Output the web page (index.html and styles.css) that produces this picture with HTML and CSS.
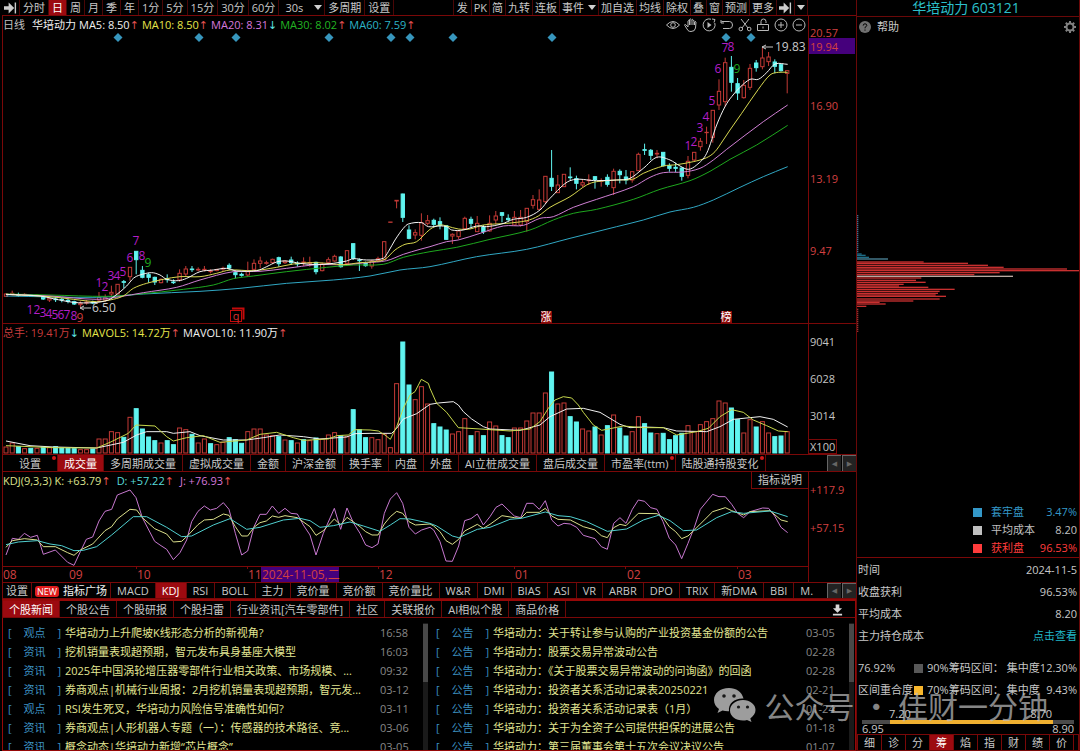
FILE: index.html
```html
<!DOCTYPE html>
<html lang="zh-CN">
<head>
<meta charset="utf-8">
<title>华培动力 603121</title>
<link rel="stylesheet" href="styles.css">
</head>
<body>
<div class="terminal">
  <main class="main">
    <nav class="toolbar">
      <button class="tool icon-tool" aria-label="展开"><svg class="jump" viewBox="0 0 14 12"><path d="M0 4h5V0l6 6-6 6V8H0zM11.500 0h1.500v12h-1.500z"/></svg></button>
      <button class="tool">分时</button><button class="tool on">日</button><button class="tool">周</button><button class="tool">月</button><button class="tool">季</button><button class="tool">年</button><button class="tool">1分</button><button class="tool">5分</button><button class="tool">15分</button><button class="tool">30分</button><button class="tool">60分</button>
      <button class="tool seconds">30s<i class="caret"></i></button><button class="tool">多周期</button><button class="tool">设置</button>
      <div class="tool-right">
        <button class="tool first">发</button><button class="tool">PK</button><button class="tool">简</button><button class="tool">九转</button><button class="tool">连板</button><button class="tool event">事件<i class="caret"></i></button><button class="tool">加自选</button><button class="tool">均线</button><button class="tool">除权</button><button class="tool">叠</button><button class="tool">窗</button><button class="tool">预测</button><button class="tool">更多</button><button class="tool" aria-label="跳转"><svg class="jump" viewBox="0 0 14 12"><path d="M0 4h5V0l6 6-6 6V8H0zM11.500 0h1.500v12h-1.500z"/></svg></button><button class="tool" aria-label="菜单"><i class="caret"></i></button>
      </div>
    </nav>

    <section class="panel">
      <div class="plot">
        <div class="info">
          <span class="c-grey period">日线</span><span class="c-white">华培动力</span>
          <span class="c-white">MA5: 8.50<b class="up">↑</b></span><span class="c-yellow">MA10: 8.50<b class="up">↑</b></span><span class="c-pink">MA20: 8.31<b class="down">↓</b></span><span class="c-green">MA30: 8.02<b class="up">↑</b></span><span class="c-cyan">MA60: 7.59<b class="up">↑</b></span>
          <div class="chart-tools">
            <svg viewBox="0 0 14 14"><path d="M.500 7Q7 0 13.500 7 7 14 .500 7z"/><circle cx="7" cy="7" r="2.300"/></svg>
            <svg viewBox="0 0 14 14"><path d="M4 9 1.500 6.500q-1-.2-.8.8L4 12.500q1 1 3 1 4 0 4.500-3.500l.5-6q-.8-1.500-1.500 0V7M4 9V3q.8-1.300 1.500 0v4M5.500 3V1.500q.8-1.300 1.500 0V7M7.500 2q.8-1.500 1.500 0v5M9 3q.8-1.300 1.500 0"/></svg>
            <svg viewBox="0 0 14 14"><path d="M9 1.200A6 6 0 1 0 12.800 5M10 1l3 .5-1 3"/><path class="solid" d="M5.500 4v6l4-3z"/></svg>
            <svg viewBox="0 0 14 14"><path d="M1.500 3.500h8q3 0 3 3.500t-3 3.500H3M1 2v3h3"/></svg>
            <svg viewBox="0 0 14 14"><path d="M3 1l7 9M11 1l-7 9"/><circle cx="2.800" cy="11" r="1.800"/><circle cx="11.200" cy="11" r="1.800"/></svg>
            <svg viewBox="0 0 14 14"><path d="M1.500 6.500h11v6h-11zM5 6V3.500q0-2.500 2.500-2.500T10 3.500V5M7 8.500v2"/></svg>
            <svg viewBox="0 0 14 14"><circle cx="7" cy="7" r="6"/><path d="M4 7h6M7 4v6"/></svg>
            <svg viewBox="0 0 14 14"><circle cx="7" cy="7" r="6"/><path d="M4 7h6"/></svg>
          </div>
        </div>
        <svg class="chart" viewBox="3 33 805 290">
          <g id="diamonds" class="diamond"></g>
          <g id="price"></g>
          <g id="counts" class="count"></g>
          <path class="pointer" d="M773 47H762m4-2-4 2 4 2M91 308H80m4-2-4 2 4 2"/>
          <text class="mark" x="775" y="51">19.83</text>
          <text class="mark" x="92" y="312">6.50</text>
          <path class="q-back" d="M232 308.500h11.500v11"/><rect class="q-box" x="230.500" y="310.500" width="11" height="11"/><text class="q-text" x="236" y="320">q</text>
          <rect class="badge-bg" x="541" y="311" width="11" height="12"/><text class="badge" x="546" y="321">涨</text>
          <rect class="badge-bg" x="721" y="311" width="11" height="12"/><text class="badge" x="726" y="321">榜</text>
        </svg>
      </div>
      <svg class="axis axis-red" viewBox="809 16 47 307">
        <text x="810" y="37">20.57</text><rect class="cursor" x="809" y="38" width="46" height="16"/><text x="810" y="51">19.94</text>
        <text x="810" y="110">16.90</text><text x="810" y="183">13.19</text><text x="810" y="255">9.47</text>
      </svg>
    </section>

    <section class="panel">
      <div class="plot">
        <div class="info">
          <span class="c-red">总手: 19.41万<b class="down">↓</b></span><span class="c-yellow">MAVOL5: 14.72万<b class="up">↑</b></span><span class="c-white">MAVOL10: 11.90万<b class="up">↑</b></span>
        </div>
        <svg class="chart" viewBox="3 341 805 113"><g id="volume"></g></svg>
      </div>
      <svg class="axis axis-grey" viewBox="809 324 47 130">
        <text x="810" y="346">9041</text><text x="810" y="383">6028</text><text x="810" y="420">3014</text><rect class="unit" x="808.500" y="439.500" width="28" height="14"/><text x="810" y="451">X100</text>
      </svg>
    </section>

    <nav class="tabs">
      <button class="tab wide dot">设置</button><button class="tab on">成交量</button><button class="tab">多周期成交量</button><button class="tab">虚拟成交量</button><button class="tab">金额</button><button class="tab">沪深金额</button><button class="tab">换手率</button><button class="tab">内盘</button><button class="tab">外盘</button><button class="tab">AI立桩成交量</button><button class="tab">盘后成交量</button><button class="tab dot">市盈率(ttm)</button><button class="tab dot">陆股通持股变化</button>
      <span class="pager"><button aria-label="上一页">◀</button><button aria-label="下一页">▶</button></span>
    </nav>

    <section class="panel">
      <div class="plot">
        <div class="info roomy">
          <span class="c-pale">KDJ(9,3,3) K: +63.79<b class="up">↑</b></span><span class="c-aqua">D: +57.22<b class="up">↑</b></span><span class="c-pink">J: +76.93<b class="up">↑</b></span>
          <button class="explain">指标说明</button>
        </div>
        <svg class="chart dates" viewBox="3 489 805 93">
          <g id="kdj"></g>
          <path class="rule" d="M3 566.500H808M136.500 566v3M247.500 566v3M378.500 566v3M514.500 566v3M625.500 566v3M737.500 566v3"/>
          <rect class="cursor" x="261" y="567" width="78" height="15"/>
          <text x="3" y="579">08</text><text x="69" y="579">09</text><text x="137" y="579">10</text><text x="248" y="579">11</text><text x="262" y="579">2024-11-05,二</text><text x="379" y="579">12</text><text x="515" y="579">01</text><text x="627" y="579">02</text><text x="738" y="579">03</text>
        </svg>
      </div>
      <svg class="axis axis-red" viewBox="809 472 47 110">
        <path class="rule" d="M808 566.500h1"/><text x="810" y="494">+117.9</text><text x="810" y="532">+57.15</text>
      </svg>
    </section>

    <nav class="tabs indicators">
      <button class="tab slim">设置</button><button class="tab slim bright"><span class="new">NEW</span>指标广场</button><button class="tab">MACD</button><button class="tab on">KDJ</button><button class="tab">RSI</button><button class="tab">BOLL</button><button class="tab">主力</button><button class="tab">竞价量</button><button class="tab">竞价额</button><button class="tab">竞价量比</button><button class="tab">W&amp;R</button><button class="tab">DMI</button><button class="tab">BIAS</button><button class="tab">ASI</button><button class="tab">VR</button><button class="tab">ARBR</button><button class="tab">DPO</button><button class="tab">TRIX</button><button class="tab">新DMA</button><button class="tab">BBI</button><button class="tab last">M.</button>
      <span class="pager"><button aria-label="上一页">◀</button><button aria-label="下一页">▶</button></span>
    </nav>

    <nav class="tabs news-tabs">
      <button class="tab on">个股新闻</button><button class="tab">个股公告</button><button class="tab">个股研报</button><button class="tab">个股扫雷</button><button class="tab">行业资讯[汽车零部件]</button><button class="tab">社区</button><button class="tab">关联报价</button><button class="tab">AI相似个股</button><button class="tab">商品价格</button>
      <button class="download" aria-label="下载"><svg viewBox="0 0 12 12"><path d="M4 0h4v4h3L6 9 1 4h3zM1 10h10v2H1z"/></svg></button>
    </nav>

    <section class="news">
      <div class="feed">
        <ul>
          <li><span class="tag"><i>[</i>观点<i>]</i></span><a href="#">华培动力上升爬坡K线形态分析的新视角?</a><time>16:58</time></li>
          <li><span class="tag"><i>[</i>资讯<i>]</i></span><a href="#">挖机销量表现超预期，智元发布具身基座大模型</a><time>16:03</time></li>
          <li><span class="tag"><i>[</i>资讯<i>]</i></span><a href="#">2025年中国涡轮增压器零部件行业相关政策、市场规模、...</a><time>09:32</time></li>
          <li><span class="tag"><i>[</i>资讯<i>]</i></span><a href="#">券商观点|机械行业周报：2月挖机销量表现超预期，智元发...</a><time>03-12</time></li>
          <li><span class="tag"><i>[</i>观点<i>]</i></span><a href="#">RSI发生死叉，华培动力风险信号准确性如何?</a><time>03-11</time></li>
          <li><span class="tag"><i>[</i>资讯<i>]</i></span><a href="#">券商观点|人形机器人专题（一）：传感器的技术路径、竞...</a><time>03-06</time></li>
          <li><span class="tag"><i>[</i>资讯<i>]</i></span><a href="#">概念动态|华培动力新增“芯片概念”</a><time>03-05</time></li>
        </ul>
        <div class="scroll"><i></i></div>
      </div>
      <div class="feed second">
        <ul>
          <li><span class="tag"><i>[</i>公告<i>]</i></span><a href="#">华培动力：关于转让参与认购的产业投资基金份额的公告</a><time>03-05</time></li>
          <li><span class="tag"><i>[</i>公告<i>]</i></span><a href="#">华培动力：股票交易异常波动公告</a><time>02-28</time></li>
          <li><span class="tag"><i>[</i>公告<i>]</i></span><a href="#">华培动力：《关于股票交易异常波动的问询函》的回函</a><time>02-28</time></li>
          <li><span class="tag"><i>[</i>公告<i>]</i></span><a href="#">华培动力：投资者关系活动记录表20250221</a><time>02-21</time></li>
          <li><span class="tag"><i>[</i>公告<i>]</i></span><a href="#">华培动力：投资者关系活动记录表（1月）</a><time>01-24</time></li>
          <li><span class="tag"><i>[</i>公告<i>]</i></span><a href="#">华培动力：关于为全资子公司提供担保的进展公告</a><time>01-18</time></li>
          <li><span class="tag"><i>[</i>公告<i>]</i></span><a href="#">华培动力：第三届董事会第十五次会议决议公告</a><time>01-07</time></li>
        </ul>
        <div class="scroll"><i></i></div>
      </div>
    </section>
  </main>

  <aside class="side">
    <h1>华培动力 603121</h1>
    <div class="help">
      <button><svg viewBox="0 0 12 12"><circle cx="6" cy="6" r="6"/><path d="M4.200 4.600q0-1.800 1.800-1.800t1.800 1.600q0 1-1.800 2v.9M6 8.500v1.200"/></svg>帮助</button>
      <button aria-label="设置"><svg class="gear" viewBox="0 0 12 12"><circle cx="6" cy="6" r="3.500"/><path d="M6 0v2.500M6 9.500V12M0 6h2.500M9.500 6H12M1.800 1.800l1.700 1.700M8.500 8.500l1.700 1.700M1.800 10.200l1.700-1.700M8.500 3.500l1.700-1.700"/></svg></button>
    </div>
    <svg class="chips" viewBox="857 37 222 440" preserveAspectRatio="xMinYMin meet"><g id="chips"></g></svg>
    <dl class="legend">
      <div class="c-blue"><dt>套牢盘</dt><dd>3.47%</dd></div>
      <div class="c-grey"><dt>平均成本</dt><dd>8.20</dd></div>
      <div class="c-hot"><dt>获利盘</dt><dd>96.53%</dd></div>
    </dl>
    <dl class="facts">
      <div><dt>时间</dt><dd>2024-11-5</dd></div>
      <div><dt>收盘获利</dt><dd>96.53%</dd></div>
      <div><dt>平均成本</dt><dd>8.20</dd></div>
      <div><dt>主力持仓成本</dt><dd><a href="#">点击查看</a></dd></div>
    </dl>
    <div class="zones">
      <span>76.92%</span><i class="swatch grey"></i><span>90%筹码区间：</span><span>集中度12.30%</span>
      <span>区间重合度</span><i class="swatch gold"></i><span>70%筹码区间：</span><span class="split">集中度<em>9.43%</em></span>
    </div>
    <div class="range">
      <div class="range-inner"><span>7.20</span><span>8.70</span></div>
      <div class="bar"><i></i></div>
      <div class="range-outer"><span>6.95</span><span>8.90</span></div>
    </div>
    <nav class="side-tabs">
      <button>细</button><button>诊</button><button>分</button><button class="on">筹</button><button>焰</button><button>指</button><button>财</button><button>绩</button><button>价</button>
    </nav>
  </aside>

  <div class="watermark">
    <svg viewBox="0 0 42 34"><path d="M15 0C6 0 0 5.500 0 12c0 4 2 7 5 9l-1.500 4 5-2.500q3 1 6.500.8C14 15 21 10 29.500 10.500 28 4 22 0 15 0z"/><path d="M29 12c-7 0-13 4.500-13 10.500S22 32.500 29 32.500q2 0 4-.6l4.500 2-1.200-3.500C39.500 28 41.500 25.500 41.500 22 41.500 16.500 36 12 29 12z"/><g class="eyes"><circle cx="10" cy="8" r="1.800"/><circle cx="20" cy="8" r="1.800"/><circle cx="24.500" cy="19" r="1.600"/><circle cx="33.500" cy="19" r="1.600"/></g></svg>
    <span>公众号 · 佳财一分钟</span>
  </div>
</div>
<script src="charts.js"></script>
</body>
</html>
```

FILE: styles.css
```css
* { box-sizing: border-box; }
body {
  margin: 0;
  background: #000;
  color: #c8c8c8;
  font: 11px/16px "Open Sans", "Noto Sans CJK SC", sans-serif;
}
button {
  margin: 0;
  padding: 0;
  border: 0;
  background: none;
  color: inherit;
  font: inherit;
  white-space: nowrap;
}
a { color: inherit; text-decoration: none; }
i, em { font-style: normal; }
ul, dl, dd { margin: 0; padding: 0; list-style: none; }

.terminal { position: relative; display: flex; height: 100vh; overflow: hidden; }
.main { flex: 1; min-width: 0; display: flex; flex-direction: column; padding-left: 2px; }

/* Top toolbar */
.toolbar { display: flex; height: 16px; padding-right: 48px; border-bottom: 1px solid #7a0808; overflow: hidden; }
.tool { display: flex; align-items: center; padding: 0 3px; border-right: 1px solid #4a0606; line-height: 14px; }
.tool.on { background: #9c0a10; color: #fff; }
.icon-tool { padding: 0 2px; }
.jump { width: 13px; height: 12px; fill: #ccc; }
.seconds { padding: 0 2px 0 6px; gap: 11px; }
.event { gap: 4px; }
.caret { border: 4px solid transparent; border-top: 5px solid #d0d0d0; border-bottom: 0; }
.tool-right { display: flex; margin-left: auto; }
.tool-right .tool { padding: 0 2px; }
.tool-right .first { padding: 0 3px; border-left: 1px solid #4a0606; }

/* Chart panels */
.panel { display: grid; grid-template-columns: minmax(0, 1fr) 48px; border-bottom: 1px solid #7a0808; }
.plot { border-left: 1px solid #7a0808; min-width: 0; }
.info { display: flex; align-items: center; gap: 3px; height: 17px; white-space: nowrap; }
.info.roomy { gap: 6px; }
.info b { font-family: "Noto Sans", "DejaVu Sans", sans-serif; font-weight: 400; }
.period { margin-right: 4px; }
.chart { display: block; width: 100%; }
.axis { display: block; width: 100%; border-left: 1px solid #7a0808; }
.axis-red text, .dates text { fill: #d24040; }
.axis-grey text { fill: #c4c4c4; }
.dates { font-size: 12px; }
.cursor { fill: #45007c; }
.unit, .rule { fill: none; stroke: #7a0808; }
.explain { align-self: stretch; margin-left: auto; padding: 0 6px; border: 1px solid #7a0808; border-width: 0 0 1px 1px; }
.chart-tools { display: flex; gap: 4px; margin-left: auto; margin-right: 2px; }
.chart-tools svg { width: 14px; height: 14px; fill: none; stroke: #b8b8b8; }
.chart-tools .solid { fill: #b8b8b8; stroke: none; }

.c-grey { color: #c0c0c0; }
.c-white { color: #f0f0f0; }
.c-yellow { color: #e6e64a; }
.c-pink { color: #d678dc; }
.c-green { color: #22b422; }
.c-cyan { color: #2cb4c8; }
.c-aqua { color: #58dcdc; }
.c-pale { color: #dce08c; }
.c-red { color: #c83c3c; }
.c-blue { color: #3498c8; }
.c-hot { color: #ff3c3c; }
.up { color: #e05050; }
.down { color: #5ce0e0; }

.line { fill: none; stroke-width: 3; stroke-linejoin: round; }
.rise { fill: #000; stroke: #c43a36; stroke-width: 3; }
.fall { fill: #60f4f0; stroke: #60f4f0; stroke-width: 3; }
.diamond { fill: #3796bd; }
.count, .badge, .q-text { text-anchor: middle; }
.count { font-size: 12px; fill: #b41ec8; }
.count .nine { fill: #1eaa1e; }
.count .low { fill: #c83c3c; }
.mark { font-size: 12px; fill: #c8c8c8; }
.pointer { fill: none; stroke: #c8c8c8; }
.badge-bg { fill: #8c0a0a; }
.badge { font-size: 11px; fill: #fff; }
.q-box, .q-back { fill: none; stroke: #c40a0a; }
.q-back { stroke-width: 2; }
.q-text { fill: #d83030; font-size: 11px; }

/* Tab strips */
.tabs { display: flex; height: 17px; border-bottom: 1px solid #7a0808; border-left: 1px solid #7a0808; overflow: hidden; }
.tab { position: relative; padding: 0 6px; border-right: 1px solid #6a0808; line-height: 15px; }
.tab.on { background: #9c0a10; color: #fff; }
.tab.wide { padding: 0 16px; }
.tab.slim { padding: 0 3px; }
.tab.last { padding-right: 0; border: 0; }
.bright { color: #f0f0f0; }
.dot::after { content: ""; position: absolute; top: 1px; right: 1px; width: 4px; height: 4px; border-radius: 2px; background: #d01818; }
.new { display: inline-block; margin-right: 4px; padding: 0 2px; border-radius: 3px; background: #e01c1c; color: #fff; font-size: 9px; line-height: 11px; }
.pager { display: flex; flex: none; gap: 1px; margin-left: auto; }
.pager button { width: 14px; border: 1px solid #666; border-width: 1px 0 0 1px; background: #222; color: #666; font: 7px/12px "DejaVu Sans", sans-serif; }
.indicators { height: 16px; }
.news-tabs { height: 19px; border-top: 2px solid #960808; border-right: 1px solid #960808; }
.news-tabs .tab { line-height: 15px; }
.download { margin: 2px 12px 0 auto; }
.download svg { display: block; width: 11px; height: 12px; fill: #d8d8d8; }

/* News feeds */
.news { display: grid; grid-template-columns: 1fr 1fr; flex: 1; min-height: 0; overflow: hidden; border: 1px solid #960808; border-top: 0; }
.feed { display: flex; min-width: 0; min-height: 0; padding-top: 5px; }
.feed ul { flex: 1; min-width: 0; }
.feed li { display: grid; grid-template-columns: 53px minmax(0, 1fr) 43px; column-gap: 4px; padding-left: 5px; line-height: 19px; white-space: nowrap; }
.feed.second li { padding-left: 7px; }
.feed a { color: #e2e692; }
.feed time { color: #888; }
.tag { display: flex; justify-content: space-between; color: #3c90c0; }
.scroll { width: 5px; margin-right: 1px; background: #1a1a1a; }
.scroll i { display: block; height: 58px; margin-top: 1px; background: #484848; }

/* Right sidebar */
.side { display: flex; flex-direction: column; width: 224px; border-left: 1px solid #6a0808; border-right: 1px solid #6a0808; }
.side h1 { height: 17px; margin: 0; padding-right: 4px; border-bottom: 1px solid #6a0808; color: #2cc0cc; font-size: 14px; font-weight: 400; line-height: 15px; text-align: center; }
.help { display: flex; justify-content: space-between; padding: 0 3px 0 2px; height: 20px; }
.help button { display: flex; align-items: center; gap: 6px; }
.help svg { width: 12px; height: 12px; fill: #707070; stroke: #000; }
.help circle { stroke: none; }
.help .gear { fill: none; stroke: #808080; stroke-width: 2; }
.help .gear circle { fill: none; stroke: #808080; }
.chips { flex: 1; width: 100%; min-height: 0; }
.legend { padding: 0 2px 0 116px; border-bottom: 1px solid #7a0808; }
.legend div { display: flex; align-items: center; height: 18px; }
.legend div::before { content: ""; width: 9px; height: 9px; margin-right: 9px; background: currentColor; }
.legend dd, .facts dd { margin-left: auto; }
.facts { padding: 1px 2px 0 1px; }
.facts div { display: flex; height: 22px; line-height: 22px; }
.facts a { color: #20b8c8; }
.zones { display: grid; grid-template-columns: 56px 13px 1fr auto; align-items: center; padding: 10px 2px 0 1px; line-height: 22px; white-space: nowrap; }
.split { display: flex; justify-content: space-between; }
.swatch { width: 9px; height: 9px; }
.grey { background: #585858; }
.gold { background: #f8b62c; }
.range { padding: 7px 5px 0; line-height: 12px; }
.range-inner { display: flex; justify-content: space-between; padding: 0 22px 0 27px; }
.range-outer { display: flex; justify-content: space-between; line-height: 10px; }
.bar { height: 4px; background: #4a4a4a; }
.bar i { display: block; width: 77%; height: 4px; margin-left: 13%; background: #f0b030; }
.side-tabs { display: flex; height: 17px; border: 1px solid #7a0808; }
.side-tabs button { flex: 0 1 24px; border-right: 1px solid #7a0808; line-height: 15px; }
.side-tabs .on { background: #9c0a10; color: #fff; }

/* Account watermark over the page */
.watermark { position: absolute; right: 32px; bottom: 28px; display: flex; align-items: center; gap: 9px; color: #bebebe; opacity: .7; font: 400 30px/36px "Noto Sans CJK SC", sans-serif; white-space: nowrap; pointer-events: none; }
.watermark svg { width: 42px; height: 34px; fill: #e0e0e0; }
.watermark .eyes { fill: #222; }
```

FILE: charts.js
```js
// Curve and bar coordinates are kept in thirds of a pixel.
const NS = 'http://www.w3.org/2000/svg';
const STEP = 18.6, FIRST = 18;

function add(parent, tag, attrs, text) {
  const el = document.createElementNS(NS, tag);
  for (const k in attrs) el.setAttribute(k, attrs[k]);
  if (text) el.textContent = text;
  parent.appendChild(el);
  return el;
}
function layer(id) {
  return add(document.getElementById(id), 'g', { transform: 'scale(0.33333)' });
}
function points(parts) {
  return parts.flatMap(([dx, dy, s]) => s.split(' ').map(p => {
    const [x, y] = p.split(',').map(Number);
    return [x + dx, y + dy];
  }));
}
function line(g, color, smooth, ...parts) {
  const p = points(parts);
  let d = 'M' + p[0];
  for (let i = 1; i < p.length; i++) {
    if (!smooth) { d += 'L' + p[i]; continue; }
    const a = p[i - 2] || p[i - 1], b = p[i - 1], c = p[i], e = p[i + 1] || c;
    const k = (c[0] - b[0]) / 3;
    const sb = (c[1] - a[1]) / (c[0] - a[0]), sc = (e[1] - b[1]) / (e[0] - b[0]);
    d += `C${b[0] + k},${b[1] + k * sb} ${c[0] - k},${c[1] - k * sc} ${c}`;
  }
  add(g, 'path', { d, class: 'line', stroke: color });
}

// Candles: direction, high, body top, body bottom, low
const candles = [
  [480, `r400,402,409,410 r392,400,404,406 c398,404,406,410 r400,403,405,408 c402,405,409,411 r402,405,407,410 c406,409,417,420 r412,415,420,426 c410,417,419,426 c413,418,420,427 c415,421,424,430 c422,425,432,435 r424,430,434,442 r420,426,429,434 c422,427,429,432 r396,412,420,426 r403,413,420,425 r377,397,402,412 r373,373,402,402 c360,365,367,384 r322,322,350,362 c273,274,299,343 c318,331,352,355 c338,344,352,368 c350,352,366,375 r355,358,368,370 c343,357,359,368 c358,366,368,372 r328,340,360,365 r318,327,342,348 c318,327,329,336 r322,328,330,334 r318,328,330,334 r328,333,335,340 r326,329,331,334 r320,325,327,335 c310,316,324,330 c334,338,344,355 c338,343,346,350 r305,335,345,350 r298,310,328,335 r290,303,310,325 r302,308,310,314 r296,298,308,312 c290,293,311,320 r300,303,308,312 c290,300,308,315 c304,310,312,320 r292,306,308,318 r290,308,310,320 c305,307,335,343 r308,312,332,334 r292,299,307,314 r284,289,303,305 c288,291,320,323 r270,272,310,310 c250,251,295,300 c295,300,302,333 c305,309,317,320 r300,303,318,326 r290,296,302,304 r244,245,298,298 r186,186,186,186 r121,121,123,145 c101,102,172,186 c196,210,235,238 r208,218,225,238 r160,188,226,242 r165,182,190,196`],
  [390, `c266,271,283,292 c262,275,286,298 c286,287,328,330 r310,313,318,342 r300,303,320,328 r260,265,296,298 c260,268,280,292 r258,280,305,306 c285,291,305,312 r256,280,303,305 r243,258,270,282 c246,248,256,277 c253,265,269,275 r243,262,285,285 r240,262,285,290 r235,235,275,305 r195,209,226,236 r178,210,238,238 r139,139,215,222 c60,145,169,183 r135,165,188,188 r133,133,170,170 c112,141,143,150 c137,146,160,178 r148,158,165,172 r133,150,152,165 c138,140,149,176 r145,152,154,170 c133,142,163,170 r116,124,173,195 c118,124,134,160 c120,141,150,163 r124,125,150,158 r68,73,122,122 c41,59,61,75 c57,61,76,90 r60,70,72,85 c66,67,107,110 c100,107,115,125 c98,112,115,126 c112,114,139,152 r78,94,136,145 r66,67,90,95 r24,34,50,62`],
  [0, `r380,397,398,432 r331,331,412,428 r238,274,315,330 r173,188,305,320 c168,202,247,275 c234,251,279,300 r240,256,293,296 r192,205,262,270 c180,189,203,215 r142,174,200,208 r156,171,185,198 c178,186,199,220 c192,194,212,215 r211,212,220,280`]
];
const price = layer('price');
let n = 0;
for (const [dy, rows] of candles) {
  for (const row of rows.split(' ')) {
    const [hi, top, bottom, lo] = row.slice(1).split(',').map(v => +v + dy);
    const x = FIRST + STEP * n++;
    const cls = row[0] === 'r' ? 'rise' : 'fall';
    add(price, 'path', { class: cls, d: `M${x} ${hi}V${top}M${x} ${bottom}V${lo}` });
    add(price, 'rect', { class: cls, x: x - 5, y: top, width: 10, height: Math.max(bottom - top, 1) });
  }
}
line(price, '#30a8c4', true,
  [0, 480, '18,408 290,412 430,402 600,394 720,385 860,370 1000,360 1110,348 1200,330'],
  [1290, 390, '0,410 140,380 290,358 420,325 560,290 640,270 720,246 790,232 850,210 930,172 1000,140 1073,110']);
line(price, '#1ea81e', true,
  [0, 480, '18,402 150,405 320,409 420,402 550,388 640,375 700,356 760,348 860,335 980,322 1060,315 1150,313 1210,292'],
  [1290, 390, '0,365 80,352 180,328 300,300 370,270 430,250 500,238 610,208 690,178 780,152 840,124 900,88 980,45 1073,-14']);
line(price, '#d080d4', true,
  [0, 480, '18,403 150,408 290,418 360,410 430,398 530,382 600,360 700,335 780,334 860,325 950,314 1030,314 1100,308 1160,302 1210,283 1260,268'],
  [1290, 390, '0,350 50,335 85,330 150,310 220,288 280,286 330,265 370,260 430,232 500,208 610,170 660,142 700,128 760,126 810,115 850,90 890,58 1000,-25 1073,-75']);
line(price, '#d8d850', true,
  [0, 480, '18,403 150,410 220,418 290,425 330,420 370,408 400,385 440,370 490,358 540,350 600,350 650,340 690,330 760,332 830,322 880,312 950,308 1030,314 1080,308 1120,305 1155,298 1185,270 1215,253 1250,245'],
  [1290, 390, '0,298 30,285 50,288 85,297 120,297 160,285 230,280 290,272 325,258 360,232 420,200 470,165 500,155 560,150 610,147 640,130 700,108 740,104 790,95 830,83 855,65 880,30'],
  [1290, 0, '900,390 935,340 985,268 1020,225 1045,217 1073,217']);
line(price, '#f4f4f4', true,
  [0, 480, '18,403 60,405 120,408 160,416 220,427 280,428 325,420 352,402 380,378 400,355 420,345 455,338 480,345 500,358 535,362 560,355 600,335 640,330 680,325 710,333 770,332 800,320 830,306 860,303 900,310 950,314 1000,310 1040,303 1060,296 1100,300 1150,295 1165,275 1185,240 1210,205 1225,192 1265,188 1285,200'],
  [1290, 390, '30,288 50,290 65,300 100,300 140,288 170,290 215,282 250,268 290,262 330,240 360,205 420,152 500,152 560,150 600,145 640,115 680,82 720,90 750,108 775,118 800,105 830,70'],
  [1290, 0, '860,375 885,320 905,290 930,262 960,238 985,238 1010,218 1035,192 1073,193']);

const diamonds = document.getElementById('diamonds');
for (const x of [118, 199, 236, 329, 391, 410, 453, 552, 726, 751]) {
  add(diamonds, 'path', { d: `M${x} 33l4.500 4.500-4.500 4.500-4.500-4.500z` });
}
const counts = document.getElementById('counts');
const sequences = [
  ['low', '30,314 37,314 43,317 49,318 55,319 61,319 67,319 74,320 80,322'],
  ['nine', '99,287 105,291 111,280 117,280 123,276 130,262 136,245 142,260 148,267'],
  ['nine', '688,150 694,146 700,132 706,121 712,105 718,73 725,52 731,51 737,73']
];
for (const [last, s] of sequences) {
  s.split(' ').forEach((p, i) => {
    const [x, y] = p.split(',');
    add(counts, 'text', { x, y, class: i === 8 ? last : 'step' }, String(i + 1));
  });
}

// Volume: direction and bar top
const volume = layer('volume');
const bars = 'r364 r352 c363 r369 c368 r368 c364 r366 c363 c367 c368 c369 r372 r372 c370 r340 r340 r318 r321 c335 r275 c249 c310 c334 c345 r352 c345 c357 r307 r312 c326 r352 r340 c354 r357 r350 c336 c342 c353 r318 r310 r310 r328 r330 c333 r343 c345 r352 c342 r345 c337 r340 r328 r321 c330 r333 c252 c312 c336 r336 r342 r325 r366 r174 c49 c178 r222 r183 r235 c294 c304 c313 r325 r318 r279 c330 r318 c330 r289 r301 c330 c336 r307 r307 r286 r262 r262 r202 c139 r235 r232 c273 c289 r310 r316 c304 r328 c300 r268 c307 c331 r318 r273 c294 c322 r324 c323 c342 c330 c323 r300 r318 r297 r288 r279 r226 r232 c247 c282 r322 r282 c304 r288 r322 c333 c331 r318';
bars.split(' ').forEach((b, i) => {
  const top = +b.slice(1) + 2;
  add(volume, 'rect', { class: b[0] === 'r' ? 'rise' : 'fall', x: FIRST + STEP * i - 6, y: 975 + top, width: 12, height: 384 - top });
});
line(volume, '#f0f0f0', false,
  [0, 975, '18,348 90,362 160,366 290,369 370,352 410,330 440,320 500,320 520,325 570,320 600,332 670,345 740,345 790,338 840,330 910,335 960,342 1040,336 1065,326 1110,325 1175,325 1190,310 1210,282 1250,266 1290,238'],
  [1290, 975, '25,234 70,230 85,240 100,260 125,282 160,305 180,312 270,316 330,300 360,275 410,252 460,250 510,262 570,298 600,308 640,306 700,308 740,318 830,320 870,305 910,283 990,275 1030,283 1073,306']);
line(volume, '#c8d84c', false,
  [0, 975, '18,362 90,365 160,368 290,369 330,352 385,325 408,300 465,303 500,335 520,348 560,338 610,332 660,352 740,345 780,328 830,322 880,338 910,346 985,342 1010,332 1045,330 1065,314 1110,315 1135,318 1155,330 1171,343 1190,305 1210,250 1230,210 1245,200 1264,163 1285,175'],
  [1290, 975, '0,190 20,235 50,262 85,308 150,312 240,318 300,312 330,290 355,250 375,225 400,215 425,219 445,240 460,262 490,300 515,316 580,303 640,308 700,308 740,330 800,320 835,310 870,275 905,254 940,262 970,285 1010,302 1045,318 1073,320']);

const kdj = layer('kdj');
line(kdj, '#c878d0', false,
  [0, 1410, '18,255 37,205 55,208 73,190 92,202 112,196 130,253 166,240 203,277 222,286 241,245 259,208 278,201 297,153 315,124 335,118 352,75 390,60 408,83 427,143 464,214 483,227 500,238 520,269 540,248 560,210 575,155 594,124 613,108 631,120 650,115 670,98 687,118 706,190 725,255 743,243 762,170 780,133 799,133 817,108 836,130 855,115 873,130 892,132 910,165 930,195 948,255 970,190 1003,115 1022,178 1041,114 1060,158 1080,190 1097,225 1116,233 1134,222 1153,130 1171,87 1190,68 1208,100 1227,172 1246,192 1265,180 1290,172'],
  [1290, 1410, '11,180 30,215 48,273 67,274 86,228 104,152 123,146 142,132 160,165 180,140 198,112 216,102 253,138 272,143 290,100 309,100 328,118 346,92 365,150 384,168 402,160 421,162 440,172 460,196 495,206 514,230 532,238 551,160 570,143 588,160 607,118 625,90 644,94 662,113 681,118 699,155 718,205 737,225 755,266 774,220 793,172 811,118 848,73 867,80 886,80 905,103 923,130 941,143 960,125 998,114 1016,115 1034,138 1053,172 1073,188']);
line(kdj, '#dce08c', false,
  [0, 1410, '18,232 37,212 73,206 112,210 130,230 166,230 203,248 222,256 241,240 278,222 315,182 335,170 352,147 390,118 410,120 427,143 464,176 500,192 520,216 545,214 565,195 594,164 613,150 640,148 670,132 687,136 706,170 725,198 743,198 762,172 780,158 799,153 817,138 836,142 855,137 892,143 930,170 948,196 970,182 1003,147 1022,165 1041,142 1080,170 1097,185 1116,195 1134,195 1153,162 1171,140 1190,124 1208,130 1227,155 1246,165 1290,162'],
  [1290, 1410, '11,168 30,185 48,212 67,223 86,208 104,183 142,163 160,175 180,163 216,137 253,143 272,145 290,127 328,127 346,115 365,138 384,148 421,150 460,170 495,180 514,197 532,203 551,173 570,163 588,167 625,130 681,131 699,143 718,170 737,185 755,206 774,198 793,180 848,125 886,113 905,122 941,135 960,125 1020,122 1053,150 1073,155']);
line(kdj, '#50d0d0', false,
  [0, 1410, '18,224 55,216 112,212 150,222 185,227 222,242 250,241 290,230 335,195 400,140 440,140 500,172 545,200 575,198 640,165 690,146 740,178 780,172 850,150 900,145 930,152 960,172 1000,167 1050,156 1090,168 1140,184 1171,165 1200,146 1230,147'],
  [1290, 1410, '0,160 20,168 67,198 86,203 142,178 180,172 240,148 275,145 346,126 384,137 421,140 470,155 532,184 590,177 640,150 685,136 720,152 760,182 800,180 860,143 905,125 941,130 1020,123 1073,140']);

// Chip distribution: y, length, colour
const chips = layer('chips');
function chip(y, length, color) {
  add(chips, 'rect', { x: 2571, y: y - 2, width: length, height: 4, fill: color });
}
for (let y = 647; y < 758; y += 6) chip(y, 4, '#446c8c');
[[762, 14], [766, 26], [772, 36]].forEach(([y, w]) => chip(y, w, '#1e6c86'));
chip(777, 93, '#4c8498');
[[786, 200], [790, 333], [796, 393], [802, 440], [807, 630], [812, 668], [818, 428], [824, 352], [834, 193], [841, 177], [847, 206], [853, 140], [858, 126], [862, 214], [868, 293], [874, 248], [880, 243], [885, 236], [889, 267], [897, 248], [903, 169], [907, 68], [912, 86], [919, 28]]
  .forEach(([y, w]) => chip(y, w, '#c83030'));
chip(829, 468, '#b8a8a0');
for (let y = 928; y < 998; y += 6) chip(y, 4, '#943030');
```
